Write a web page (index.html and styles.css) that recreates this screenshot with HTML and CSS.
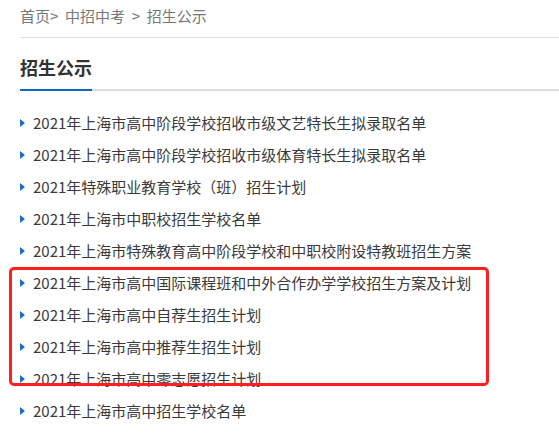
FILE: index.html
```html
<!DOCTYPE html>
<html lang="zh-cn">
<head>
    <meta charset="UTF-8">
    <meta name="viewport" content="width=device-width, initial-scale=1.0">
    <title>招生公示</title>
    <link rel="stylesheet" href="styles.css">
</head>
<body>
    <div class="page">
        <div class="crumb">
            <a href="#">首页</a>&gt;&nbsp; <a href="#">中招中考</a>&nbsp; &gt;&nbsp; <span>招生公示</span>
        </div>

        <h2 class="title"><span>招生公示</span></h2>

        <ul class="list">
            <li><a href="#">2021年上海市高中阶段学校招收市级文艺特长生拟录取名单</a></li>
            <li><a href="#">2021年上海市高中阶段学校招收市级体育特长生拟录取名单</a></li>
            <li><a href="#">2021年特殊职业教育学校（班）招生计划</a></li>
            <li><a href="#">2021年上海市中职校招生学校名单</a></li>
            <li><a href="#">2021年上海市特殊教育高中阶段学校和中职校附设特教班招生方案</a></li>
            <li><a href="#">2021年上海市高中国际课程班和中外合作办学学校招生方案及计划</a></li>
            <li><a href="#">2021年上海市高中自荐生招生计划</a></li>
            <li><a href="#">2021年上海市高中推荐生招生计划</a></li>
            <li><a href="#">2021年上海市高中零志愿招生计划</a></li>
            <li><a href="#">2021年上海市高中招生学校名单</a></li>
        </ul>

        <div class="mark"></div>
    </div>
</body>
</html>
```

FILE: styles.css
```css
body {
    font-family: "Noto Sans CJK SC", "Noto Sans", sans-serif;
    margin: 0;
    padding: 0;
    background: #ffffff;
    color: #333;
}
.page {
    position: relative;
    padding-left: 20px;
    overflow: hidden;
    height: 437px;
}
.crumb {
    font-size: 15px;
    line-height: 20px;
    color: #777;
    padding: 6px 0 11px;
    border-bottom: 1px solid #ddd;
}
.crumb a {
    color: #777;
    text-decoration: none;
}
.title {
    margin: 0;
    padding-top: 17px;
    font-size: 18px;
    line-height: 24px;
    font-weight: bold;
    color: #333;
    border-bottom: 2px solid #ddd;
}
.title span {
    display: inline-block;
    padding-bottom: 10px;
    margin-bottom: -2px;
    border-bottom: 2px solid #1068c4;
}
.list {
    list-style: none;
    margin: 16px 0 0;
    padding: 0;
}
.list li {
    font-size: 15px;
    line-height: 32px;
    display: flex;
    align-items: center;
    white-space: nowrap;
}
.list li::before {
    content: "";
    width: 0;
    height: 0;
    border-top: 4px solid transparent;
    border-bottom: 4px solid transparent;
    border-left: 5px solid #1670c8;
    margin-right: 8px;
}
.list a {
    color: #3a3a3a;
    text-decoration: none;
}
.mark {
    position: absolute;
    left: 9px;
    top: 267px;
    width: 474px;
    height: 113px;
    border: 3px solid #ff1f1f;
    border-radius: 5px;
}
```
